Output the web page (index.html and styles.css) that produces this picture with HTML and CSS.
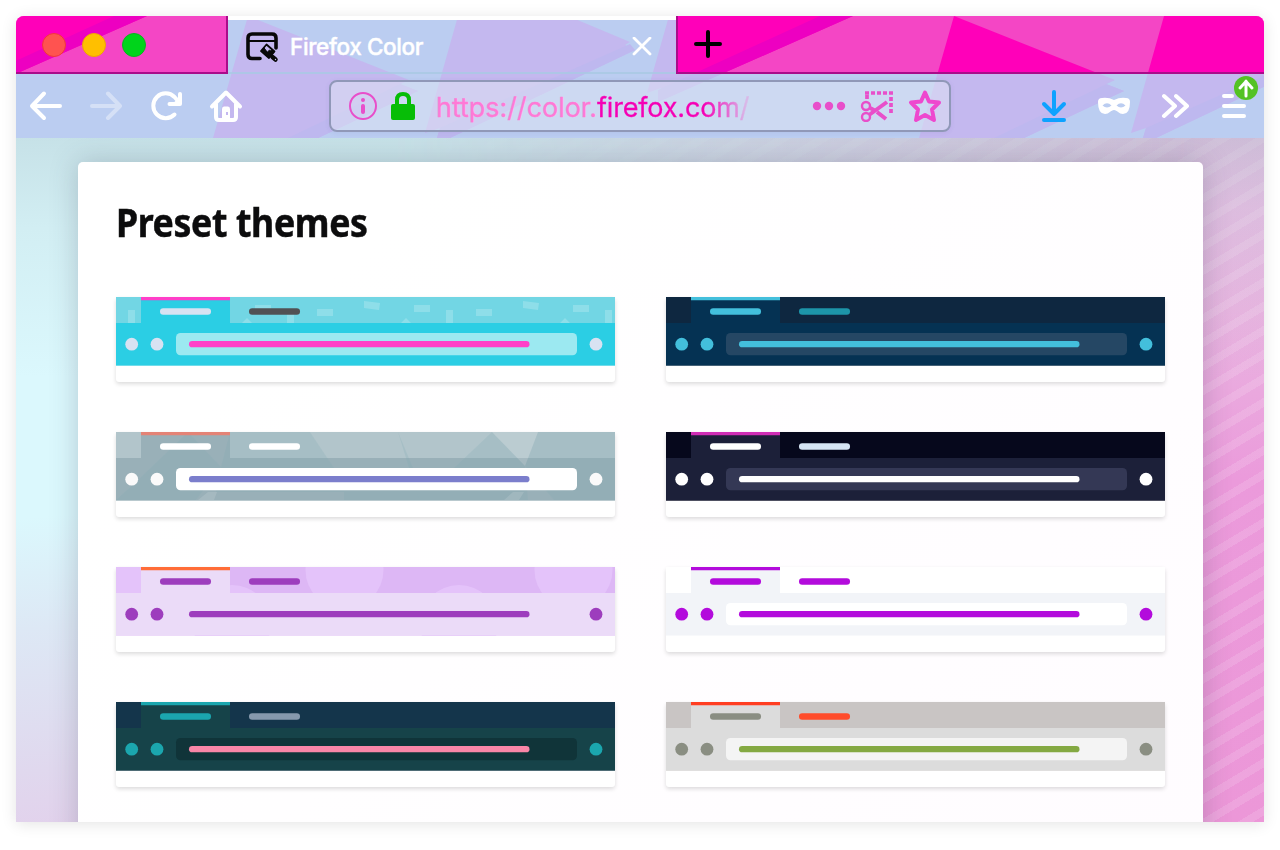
FILE: index.html
```html
<!DOCTYPE html>
<html lang="en">
<head>
<meta charset="utf-8">
<title>Firefox Color</title>
<link rel="stylesheet" href="styles.css">
</head>
<body>
<main class="window">
  <header class="chrome">
    <svg class="facets" width="1248" height="122" viewBox="16 16 1248 122">
      <defs>
        <g id="shapes">
          <path class="base" d="M248 16L213 138H318L418 91L400 84L409 80ZM458 16L425 133L440 128L437 138H450L635 50L625 45L630 42L568 16ZM669 16L647 93L661 88L658 102L853 16Z"/>
          <path class="streak" d="M409 80L288 138H318L418 91L400 84ZM630 44L440 128L437 138H450L635 50ZM820 16L658 90V102L853 16Z"/>
        </g>
        <g id="facets"><use href="#shapes" x="-706"/><use href="#shapes"/><use href="#shapes" x="706"/></g>
        <clipPath id="tool"><path d="M16 74H228V20H676V74H1264V138H16Z"/></clipPath>
      </defs>
      <g class="frame"><path class="ground" d="M16 16H1264V138H16Z"/><use href="#facets"/></g>
      <g class="toolbar-tint" clip-path="url(#tool)"><path class="ground" d="M16 16H1264V138H16Z"/><use href="#facets"/></g>
      <path fill="#fff" d="M228 16H676V20H228Z"/>
      <path class="edge" d="M16 72H226V16H228V74H16ZM676 16H678V72H1264V74H676Z"/>
      <path fill="#a9c9e4" opacity=".8" d="M228 72H676V74H228Z"/>
    </svg>
    <div class="tabs">
      <div class="lights"><i class="red"></i><i class="amber"></i><i class="green"></i></div>
      <div class="tab">
        <svg width="34" height="32" viewBox="0 0 34 32" fill="none" stroke="#080808" stroke-width="3.6" stroke-linecap="round"><path d="M15 27.500H7Q3 27.500 3 23.500V7Q3 3 7 3H27Q31 3 31 7V17"/><path d="M4 10H30" stroke-width="2.200"/><path d="M21.500 13.500L29.500 20.500L24 27L16 20Z" stroke-width="1.800" stroke-linejoin="round"/><path fill="#080808" stroke-width="1" d="M18.700 17L16 20L24 27L29.500 20.500L27 18.500L25.500 20L24.500 19L22.500 21Z"/><path d="M27.500 26L30.500 28.500" stroke-width="4.500"/><circle cx="30.500" cy="28.500" r=".7" fill="#c4b8f0" stroke="none"/></svg>
        <span class="tab-title">Firefox Color</span>
        <svg class="close" width="20" height="20" viewBox="0 0 20 20" stroke="#fff" stroke-width="2.8" stroke-linecap="round"><path d="M2 1L18 17M18 1L2 17"/></svg>
      </div>
      <svg class="plus" width="28" height="28" viewBox="0 0 28 28" stroke="#000" stroke-width="4" stroke-linecap="round"><path d="M14 2V26M2 14H26"/></svg>
    </div>
    <nav class="toolbar">
      <div class="nav-icons">
        <svg width="34" height="34" viewBox="0 0 34 34"><path d="M31 17H3M15 4.500L3 17L15 29"/></svg>
        <svg class="faded" width="34" height="34" viewBox="0 0 34 34"><path d="M3 17H31M19 4.500L31 17L19 29"/></svg>
        <svg width="34" height="34" viewBox="0 0 34 34"><path d="M25.500 25.500A12.400 12.400 0 1 1 25.500 8L30 13"/><path d="M31 5V15H20.500"/><path fill="#fff" stroke="none" d="M31 8V15H23Z"/></svg>
        <svg width="34" height="34" viewBox="0 0 34 34"><path d="M3 17.500L17 3.500L31 17.500M7 15V28Q7 31 10 31H24Q27 31 27 28V15"/><path fill="#fff" stroke="none" d="M13 32V20Q13 17.500 15 17.500H19Q21 17.500 21 20V32Z"/><path stroke="none" fill="#c4b8f0" d="M17 23h2v3h-2z"/></svg>
      </div>
      <div class="address">
        <svg width="28" height="28" viewBox="0 0 28 28" fill="none" stroke="#e84fca" stroke-width="2"><circle cx="14" cy="14" r="13"/><path d="M14 14V20" stroke-width="4" stroke-linecap="round"/><circle cx="14" cy="8" r="2" fill="#e84fca" stroke="none"/></svg>
        <svg class="lock" width="24" height="28" viewBox="0 0 24 28"><path d="M6 14V8Q6 2 12 2T18 8V14" fill="none" stroke="#07bd07" stroke-width="4"/><rect y="12" width="24" height="16" rx="2" fill="#07bd07"/></svg>
        <span class="url">https://color.<b>firefox.com/</b></span>
        <svg width="34" height="10" viewBox="0 0 34 10" fill="#e84fca"><circle cx="5" cy="5" r="4.200"/><circle cx="17" cy="5" r="4.200"/><circle cx="29" cy="5" r="4.200"/></svg>
        <svg class="snip" width="34" height="32" viewBox="0 0 34 32" fill="none" stroke="#e84fca" stroke-width="3.700"><path stroke-dasharray="4 2" d="M5 3H33M31 7V25M7 5V11"/><g stroke-width="2.400"><circle cx="6" cy="16" r="4"/><circle cx="6" cy="27" r="4"/></g><path stroke-width="4" d="M9 25L27 12M10 18L14 20M17 22L26 29"/></svg>
        <svg class="star" width="34" height="34" viewBox="0 0 34 34" fill="none" stroke="#ee48ce" stroke-width="4" stroke-linejoin="round"><path d="M17 3.500L21 12.500L31 13.500L24 20.500L26 31L17 26L8 31L10 20.500L3 13.500L13 12.500Z"/></svg>
      </div>
      <div class="tools">
        <svg width="26" height="34" viewBox="0 0 26 34" class="blue"><path d="M13 3V25M3 15L13 25L23 15M3 31H23"/></svg>
        <svg width="34" height="20" viewBox="0 0 34 20"><path stroke="none" fill="#fff" fill-rule="evenodd" d="M1 6Q1 2 5 2Q11 1 17 4Q23 1 29 2Q33 2 33 6Q33 18 26 18C22 18 20 14 17 14S12 18 8 18Q1 18 1 6ZM5.500 9.500Q10 13.500 14.500 9.500Q10 5 5.500 9.500ZM19.500 9.500Q24 13.500 28.500 9.500Q24 5 19.500 9.500Z"/></svg>
        <svg width="28" height="28" viewBox="0 0 28 28"><path d="M3 4L14 14L3 24M15 4L26 14L15 24"/></svg>
        <span class="menu"><svg width="28" height="28" viewBox="0 0 28 28"><path d="M3 4H11M3 14H23M3 24H23"/></svg><svg class="badge" width="24" height="24" viewBox="0 0 24 24"><circle cx="12" cy="12" r="12" fill="#54c224" stroke="none"/><path stroke-width="3" d="M12 20V5M6 12L12 5.500L18 12"/></svg></span>
      </div>
    </nav>
  </header>
  <div class="page">
    <section class="panel">
      <h1>Preset themes</h1>
      <div class="themes" id="themes"></div>
    </section>
  </div>
</main>
<script src="themes.js"></script>
</body>
</html>
```
FILE: styles.css
```css
* { box-sizing: border-box; }
body { margin: 0; background: #fff; font-family: "Open Sans", sans-serif; overflow: hidden; }
svg { display: block; flex: none; }
.window { width: 1248px; height: 806px; margin: 16px; border-radius: 8px 8px 0 0; box-shadow: 0 2px 16px rgba(0,0,0,.11); }
.chrome { position: relative; height: 122px; border-radius: 8px 8px 0 0; overflow: hidden; }
.facets { position: absolute; inset: 0; }
.ground { fill: var(--ground); }
.base { fill: var(--base); }
.streak { fill: var(--streak); }
.frame { --ground: #f446c5; --base: #ff00b9; --streak: #ed00c1; }
.toolbar-tint { --ground: #bbcdf1; --base: #c4b8ef; --streak: #beb8ef; }
.edge { fill: #a90c8b; }
.tabs { position: relative; height: 58px; display: flex; align-items: center; }
.lights { width: 212px; padding-left: 26px; display: flex; gap: 16px; }
.lights i { width: 24px; height: 24px; border-radius: 50%; border: 1px solid; }
.lights .red { background: #ff5350; border-color: #f1363c; }
.lights .amber { background: #ffbf00; border-color: #f0a500; }
.lights .green { background: #00d41b; border-color: #07b51f; }
.tab { width: 448px; height: 58px; padding: 3px 24px 0 17px; display: flex; align-items: center; color: #fff; }
.tab-title { margin-left: 11px; font: 500 22.5px/30px Inter, sans-serif; letter-spacing: -.38px; -webkit-text-stroke: .4px #fff; }
.close { margin-left: auto; }
.plus { margin: -3px 0 0 18px; }
.toolbar { position: relative; height: 64px; display: flex; align-items: center; }
.nav-icons { width: 313px; padding-left: 13px; display: flex; gap: 26px; }
.nav-icons svg, .tools svg { fill: none; stroke: #fff; stroke-width: 4; stroke-linecap: round; stroke-linejoin: round; }
.nav-icons .faded { opacity: .38; }
.address { width: 622px; height: 52px; border: 2px solid #9098b8; border-radius: 8px; background: rgba(223,230,244,.5); padding: 0 7px 0 18px; display: flex; align-items: center; box-shadow: 0 1px 5px rgba(80,60,150,.08); }
.lock { margin-left: 14px; }
.url { width: 376px; margin: 3px 0 0 21px; color: #ff79d6; font: 400 27px/32px Inter, sans-serif; letter-spacing: -.04px; white-space: nowrap; -webkit-text-stroke: .3px #ff79d6; }
.url b { font-weight: 400; letter-spacing: -.18px; background: linear-gradient(90deg,#f500b5 70%,#d9b8e8 98%); color: transparent; background-clip: text; -webkit-background-clip: text; -webkit-text-stroke: .3px transparent; }
.snip { margin-left: 14px; }
.star { margin-left: 14px; }
.tools { display: flex; align-items: center; padding-left: 90px; }
.tools .blue { stroke: #0da2ff; }
.tools > svg:nth-child(2) { margin-left: 30px; }
.tools > svg:nth-child(3) { margin-left: 30px; }
.menu { position: relative; margin-left: 32px; }
.tools .badge { position: absolute; left: 13px; top: -16px; }
.page { position: relative; height: 684px; padding: 24px 61px 0 62px; overflow: hidden; background:
  linear-gradient(180deg,rgba(125,150,155,.22),rgba(150,165,175,.12) 70px,transparent 240px),
  repeating-linear-gradient(149deg,rgba(255,255,255,.13) 0 8px,transparent 8px 20.6px),
  linear-gradient(180deg,#e4c7e8,#e9b5e1 25%,#eb9adb 50%,#ec97d8); }
.page::before { content: ""; position: absolute; inset: 0; background: linear-gradient(180deg,rgba(125,145,155,.22),rgba(130,150,155,.1) 90px,transparent 240px), linear-gradient(175deg,#dbf8fd 0,#dbf8fd 48%,#dde8f5 62%,#e0d8ee 80%,#e4cbea 95%); -webkit-mask-image: linear-gradient(90deg,#000 30%,transparent 95%); mask-image: linear-gradient(90deg,#000 30%,transparent 95%); }
.panel { position: relative; height: 700px; padding: 34px 38px; border-radius: 5px; background: linear-gradient(135deg,#fff 20%,#fffcff); box-shadow: 0 0 28px rgba(60,70,90,.26); }
h1 { margin: 0 0 48px; color: #0c0c0d; font: 700 38.5px/53px "Noto Sans", sans-serif; letter-spacing: -.4px; -webkit-text-stroke: .5px #0c0c0d; transform: scaleX(.926); transform-origin: left; white-space: nowrap; }
.themes { display: grid; grid-template-columns: 500px 500px; gap: 50px; margin-left: -.4px; padding-top: .3px; }
.theme { width: 499px; height: 85px; background: #fff; border-radius: 3px; box-shadow: 0 2px 4px rgba(0,0,0,.14); }
```
FILE: themes.js
```js
const confetti = (() => {
  let s = "";
  for (let x = -152; x < 500; x += 159) {
    s += `<path d="M${x+82} 4l16 2-1 7-15-2zM${x+132} 8h16v7h-16zM${x+35} 12h16v7h-16zM${x+164} 13h7v13h-7zM${x+119} 26l5-5 5 5z"/>`;
  }
  return `<g fill="#fff" opacity=".2">${s}</g>`;
})();

const facets = `<g fill="#7faab3" opacity=".22"><path d="M114 0H194L218 36H293L325 68H228V60H100L105 35Z"/><path d="M282 0L293 36L303 68H412L409 34L376 0L338 36H297Z"/><path d="M422 0L409 34L438 68H499V0Z"/><path d="M72 0L20 50L0 68H80L105 35Z"/></g><g fill="#fff" opacity=".12"><path d="M376 0L409 34L422 0ZM82 68L92 60H101L98 68ZM388 68L397 60H408L403 68Z"/></g>`;

const circles = `<g fill="#e4c3fa"><circle cx="228.500" cy="3" r="39"/><circle cx="457.500" cy="3" r="39"/><circle cx="116" cy="57" r="39"/><circle cx="343" cy="57" r="39"/><circle cx="0" cy="3" r="39"/></g>`;

// frame, toolbar, accent line, active tab label, idle tab label, buttons, field, url, artwork
const themes = [
  ["#72d6e4", "#2bcee4", "#ff3ec8", "#d8e2f2", "#515154", "#d8e2f2", "#9ce9f1", "#ff40c8", confetti],
  ["#0e2740", "#053253", "#43bfdc", "#43bfdc", "#1d95a9", "#43bfdc", "#254764", "#43bfdc", ""],
  ["#b2c5cb", "#99b0b8", "#e48376", "#ffffff", "#ffffff", "#fafafa", "#ffffff", "#7b7ecc", facets],
  ["#06081c", "#1c2039", "#d02db5", "#ffffff", "#d6e5f4", "#ffffff", "#343855", "#ffffff", ""],
  ["#ddb7f5", "#ebdbf8", "#ff6c38", "#9d3dbd", "#9d3dbd", "#9d3dbd", "#ebdbf8", "#9d3dbd", circles],
  ["#ffffff", "#f2f4f8", "#b30bdc", "#b30bdc", "#b30bdc", "#b30bdc", "#ffffff", "#b30bdc", ""],
  ["#14354b", "#164349", "#1ba6ae", "#1ba6ae", "#8699ad", "#1ba6ae", "#103439", "#f986a7", ""],
  ["#c9c5c4", "#dcdcdc", "#ff3e21", "#8a8e82", "#ff4c2b", "#8a8e82", "#f4f4f4", "#84a942", ""]
];

document.getElementById("themes").innerHTML = themes.map(([frame, bar, line, active, idle, button, field, url, art]) => {
  const overlay = art === facets;
  return `<article class="theme"><svg width="499" height="69" viewBox="0 0 499 69">
    <path fill="${frame}" d="M0 0H499V68.600H0Z"/>${overlay ? "" : art}
    <path fill="${bar}" d="M0 26H25V0H114V26H499V68.600H0Z"/>${overlay ? art : ""}
    <path fill="${line}" d="M25 0H114V3.300H25Z"/>
    <rect x="44" y="11.300" width="51" height="6.500" rx="3.200" fill="${active}"/>
    <rect x="133" y="11.300" width="51" height="6.500" rx="3.200" fill="${idle}"/>
    <g fill="${button}"><circle cx="15.700" cy="47.200" r="6.400"/><circle cx="41" cy="47.200" r="6.400"/><circle cx="480" cy="47.200" r="6.400"/></g>
    <rect x="60" y="36" width="401" height="22.300" rx="4.500" fill="${field}"/>
    <rect x="73" y="44" width="340.500" height="6.300" rx="3.200" fill="${url}"/>
  </svg></article>`;
}).join("");
```
